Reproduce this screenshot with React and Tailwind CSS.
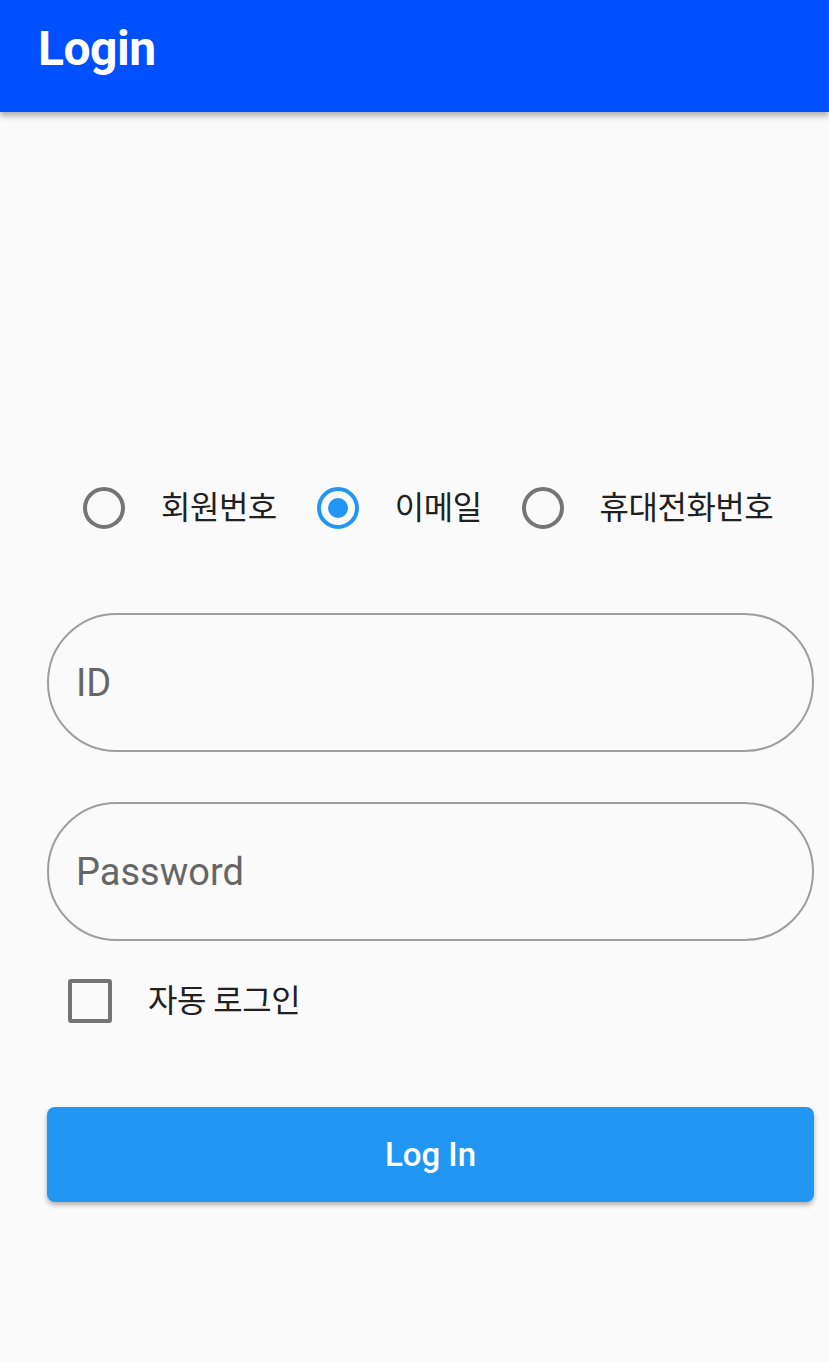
import { useState } from 'react'

const options = [
  { key: 'member', label: '회원번호' },
  { key: 'email', label: '이메일' },
  { key: 'phone', label: '휴대전화번호' },
]

const Radio = ({ checked }) => (
  <span
    className={
      'flex h-[42px] w-[42px] shrink-0 items-center justify-center rounded-full border-[4px] ' +
      (checked ? 'border-[#2196f3]' : 'border-[#757575]')
    }
  >
    {checked && <span className="h-[20px] w-[20px] rounded-full bg-[#2196f3]" />}
  </span>
)

export default function App() {
  const [type, setType] = useState('email')
  const [auto, setAuto] = useState(false)

  return (
    <div className="flex min-h-[1362px] w-[829px] flex-col bg-[#fafafa] font-['Roboto','Noto_Sans_CJK_KR',sans-serif]">
      {/* app bar */}
      <div className="relative z-10 flex h-[112px] items-center bg-[#0050ff] px-[38px] pb-[14px] shadow-[0_4px_6px_rgba(0,0,0,0.3)]">
        <h1 className="text-[48px] font-bold leading-none tracking-[-0.5px] text-white">Login</h1>
      </div>

      <div className="flex flex-col px-[47px] pr-[15px]">
        {/* login type */}
        <div className="mt-[375px] flex items-center pl-[36px]">
          {options.map((o, i) => (
            <button
              key={o.key}
              onClick={() => setType(o.key)}
              className={'flex items-center gap-[36px] ' + (i > 0 ? 'ml-[40px]' : '')}
            >
              <Radio checked={type === o.key} />
              <span className="text-[32px] leading-none tracking-[-0.5px] text-[#212121]">{o.label}</span>
            </button>
          ))}
        </div>

        {/* fields */}
        <input
          placeholder="ID"
          className="mt-[84px] h-[139px] w-full rounded-full border-2 border-[#9e9e9e] bg-transparent px-[27px] text-[38px] text-[#212121] outline-none placeholder:text-[#666666]"
        />
        <input
          type="password"
          placeholder="Password"
          className="mt-[50px] h-[139px] w-full rounded-full border-2 border-[#9e9e9e] bg-transparent px-[27px] text-[38px] text-[#212121] outline-none placeholder:text-[#666666]"
        />

        {/* auto login */}
        <button onClick={() => setAuto(!auto)} className="mt-[38px] flex items-center gap-[36px] pl-[21px]">
          <span
            className={
              'flex h-[44px] w-[44px] items-center justify-center rounded-[3px] border-[4px] ' +
              (auto ? 'border-[#2196f3] bg-[#2196f3]' : 'border-[#757575]')
            }
          />
          <span className="text-[32px] leading-none tracking-[-0.5px] text-[#212121]">자동 로그인</span>
        </button>

        {/* submit */}
        <button className="mt-[84px] h-[95px] w-full rounded-[8px] bg-[#2196f3] text-[33px] font-medium text-white shadow-[0_3px_5px_rgba(0,0,0,0.3)]">
          Log In
        </button>
      </div>
    </div>
  )
}
